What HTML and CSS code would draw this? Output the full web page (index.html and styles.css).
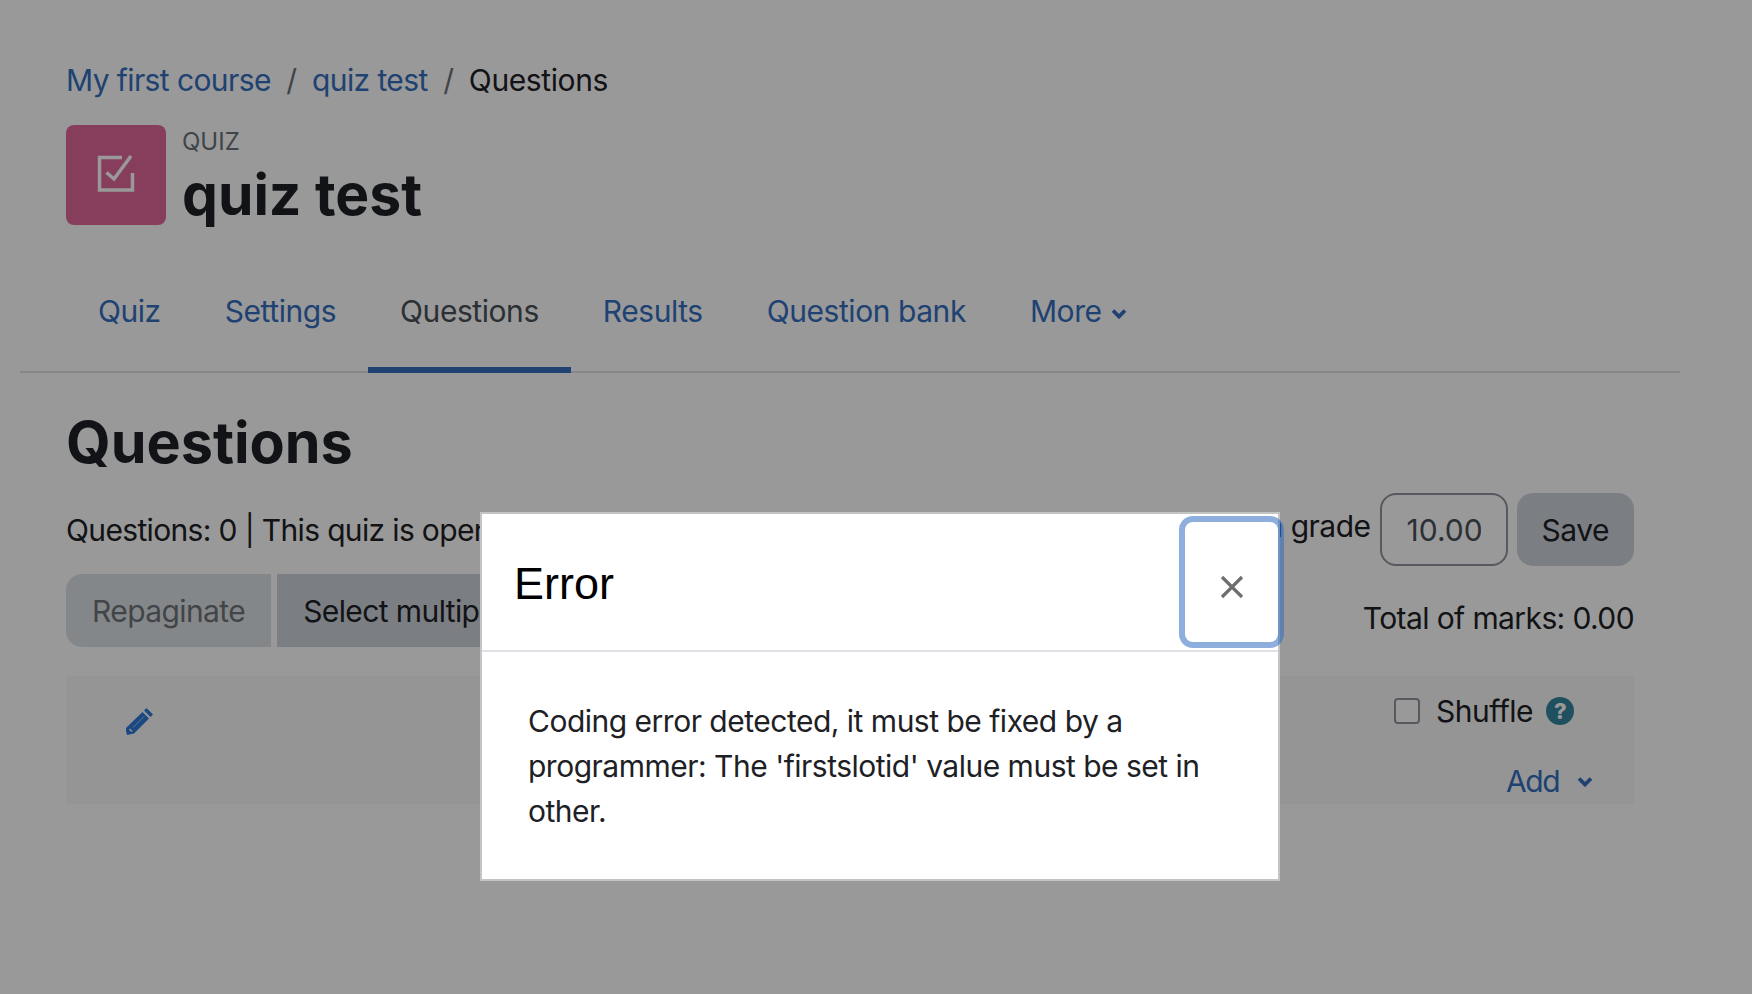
FILE: index.html
```html
<!DOCTYPE html>
<html>
<head>
  <title>quiz test: Questions</title>
  <meta charset="UTF-8">
  <link rel="stylesheet" href="styles.css">
</head>
<body>
  <div class="page">
    <nav class="crumbs">
      <a href="#">My first course</a><span class="sep">/</span><a href="#">quiz test</a><span class="sep">/</span><span class="here">Questions</span>
    </nav>

    <header class="head">
      <div class="mod-icon">
        <svg width="38" height="38" viewBox="0 0 38 38" fill="none" stroke="#fff" stroke-width="3.500">
          <path d="M25 3.500H2.500V36H35.500V19"/>
          <path d="M9.500 18.500L17 25L34 2"/>
        </svg>
      </div>
      <div>
        <div class="mod-type">QUIZ</div>
        <h1>quiz test</h1>
      </div>
    </header>

    <ul class="tabs">
      <li><a href="#">Quiz</a></li>
      <li><a href="#">Settings</a></li>
      <li class="active"><a href="#">Questions</a></li>
      <li><a href="#">Results</a></li>
      <li><a href="#">Question bank</a></li>
      <li>
        <a href="#">More<svg class="chev" width="16" height="11" viewBox="0 0 16 11" fill="none" stroke="#346ebe" stroke-width="3.800"><path d="M2 2.500L8 8.500L14 2.500"/></svg></a>
      </li>
    </ul>

    <h2>Questions</h2>

    <div class="info-row">
      <div class="info">Questions: 0 | This quiz is open</div>
      <div class="grade">
        <label for="maxgrade">Maximum grade</label>
        <input id="maxgrade" type="text" value="10.00">
        <button class="btn save">Save</button>
      </div>
    </div>

    <div class="tool-row">
      <div class="tools">
        <button class="btn first" disabled>Repaginate</button>
        <button class="btn">Select multiple items</button>
      </div>
      <div class="total">Total of marks: 0.00</div>
    </div>

    <section class="panel">
      <svg class="pencil" width="28" height="28" viewBox="0 0 28 28">
        <path fill="#2f78d8" d="M20.500 1L27 7.500L24.500 10L18 3.500ZM16.500 5L23 11.500L8 26.500L1 28L0 24V21ZM3 22.500L5.500 25L6.500 24L4 21.500Z" fill-rule="evenodd"/>
        <path stroke="#a9c6ee" stroke-width="1" d="M7 20.500L18 9.500"/>
      </svg>
      <div class="panel-right">
        <div class="shuffle">
          <span class="check"></span>
          <span>Shuffle</span>
          <span class="help">?</span>
        </div>
        <a class="add" href="#">Add
          <svg width="16" height="11" viewBox="0 0 16 11" fill="none" stroke="#346ebe" stroke-width="3.800"><path d="M2 2.500L8 8.500L14 2.500"/></svg>
        </a>
      </div>
    </section>
  </div>

  <div class="backdrop">
    <div class="modal">
      <div class="modal-head">
        <div class="modal-title">Error</div>
        <button class="close">
          <svg width="24" height="24" viewBox="0 0 24 24" stroke="#6e6e6e" stroke-width="3.200"><path d="M2 2L22 22M22 2L2 22"/></svg>
        </button>
      </div>
      <div class="modal-body">Coding error detected, it must be fixed by a programmer: The 'firstslotid' value must be set in other.</div>
    </div>
  </div>
</body>
</html>
```

FILE: styles.css
```css
html, body { margin: 0; height: 994px; overflow: hidden; background: #fff; }
body { font-family: Inter, "Noto Sans", sans-serif; font-size: 30px; letter-spacing: -.5px; color: #1d2125; }
a { color: #346ebe; text-decoration: none; }

.page { padding: 62px 118px 0 66px; }

.crumbs { line-height: 36px; margin-bottom: 27px; letter-spacing: -.6px; }
.sep { color: #6a737b; margin: 0 15.500px; }
.here { letter-spacing: -.4px; }

.head { display: flex; gap: 16px; height: 100px; }
.mod-icon { width: 100px; height: 100px; border-radius: 8px; background: #e2689c; display: flex; align-items: center; justify-content: center; }
.mod-icon svg { margin-bottom: 4px; }
.mod-type { font-size: 24px; letter-spacing: 0; line-height: 34px; color: #6a737b; }
h1 { margin: 3px 0 0; font-size: 57px; letter-spacing: 0; line-height: 66px; font-weight: 700; }

.tabs { list-style: none; display: flex; margin: 27px -46px 0; padding: 0 0 0 46px; height: 121px; border-bottom: 2px solid #dee2e6; box-sizing: border-box; letter-spacing: -.44px; }
.tabs li { margin-bottom: -2px; }
.tabs a { display: block; height: 121px; box-sizing: border-box; padding: 40px 32px 0; line-height: 38px; }
.tabs .active a { color: #495057; border-bottom: 6px solid #346ebe; }
.chev { margin-left: 9px; vertical-align: 3px; }

h2 { margin: 35px 0 17px; font-size: 57.500px; letter-spacing: 0; line-height: 68px; font-weight: 700; }

.info-row { display: flex; justify-content: space-between; align-items: center; height: 73px; }
.info { letter-spacing: -.65px; }
.grade { display: flex; align-items: center; gap: 9px; }
.grade label { margin-top: -8px; }
.grade input { width: 128px; height: 73px; box-sizing: border-box; border: 2px solid #8f959e; border-radius: 16px; padding: 0 25px; font: inherit; color: #495057; background: #fff; }
.btn { font: inherit; letter-spacing: -.6px; color: #1d2125; background: #ced4da; border: 0; height: 73px; padding: 0 26px; }
.grade .save { letter-spacing: -.5px; padding: 0 25px; border-radius: 16px; }

.tool-row { display: flex; justify-content: space-between; align-items: center; height: 73px; margin-top: 8px; }
.tools { display: flex; gap: 6px; }
.tools .first { border-radius: 16px 0 0 16px; color: #6f7478; background: #dde1e5; }
.total { margin-top: 14px; letter-spacing: -.6px; }

.panel { display: flex; justify-content: space-between; height: 128px; margin-top: 29px; background: #f8f9fa; box-sizing: border-box; padding: 31px 41px 0 60px; }
.panel-right { display: flex; flex-direction: column; align-items: flex-end; }
.shuffle { display: flex; align-items: center; line-height: 36px; margin-top: -14px; margin-right: 19px; }
.check { width: 26px; height: 26px; box-sizing: border-box; border: 2px solid #8f959e; border-radius: 4px; background: #fff; margin-right: 16px; }
.help { width: 28px; height: 28px; border-radius: 50%; background: #33869e; color: #fff; font-size: 22px; font-weight: 800; line-height: 28px; text-align: center; margin-left: 13px; }
.add { display: flex; align-items: center; gap: 18px; line-height: 38px; margin-top: 33px; letter-spacing: -1.500px; }

.backdrop { position: fixed; inset: 0; background: rgba(0, 0, 0, .4); }
.modal { position: absolute; left: 480px; top: 512px; width: 800px; height: 369px; box-sizing: border-box; background: #fff; border: 2px solid #c4c4c4; }
.modal-head { display: flex; justify-content: space-between; height: 138px; box-sizing: border-box; border-bottom: 2px solid #dee2e6; padding-left: 32px; }
.modal-title { font-family: "Liberation Sans", Arial, sans-serif; font-size: 45px; letter-spacing: 0; line-height: 52px; padding-top: 44px; color: #000; }
.close { position: absolute; right: 0; top: 8px; width: 93px; height: 120px; box-sizing: border-box; background: #fff; border: 0; border-radius: 8px; box-shadow: 0 0 0 6px rgba(50, 110, 195, .55); display: flex; align-items: center; justify-content: center; padding: 10px 0 0; }
.modal-body { padding: 47px 46px 0; line-height: 45px; color: #1d2125; }
```
